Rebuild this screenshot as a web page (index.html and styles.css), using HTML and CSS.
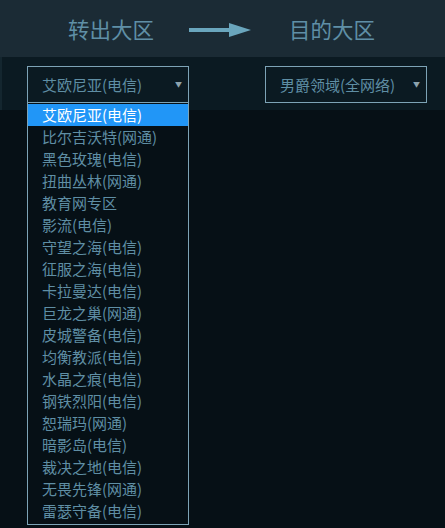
FILE: index.html
```html
<!DOCTYPE html>
<html lang="zh-CN">
<head>
    <meta charset="UTF-8" />
    <title>大区转移</title>
    <meta name="viewport" content="width=device-width, initial-scale=1.0" />
    <link rel="stylesheet" href="styles.css">
</head>
<body>
    <div class="header">
        <span class="title">转出大区</span>
        <svg class="arrow" width="62" height="16" viewBox="0 0 62 16">
            <rect x="0" y="6" width="42" height="4" fill="#6aa6bd" />
            <polygon points="40,1 62,8 40,15" fill="#6aa6bd" />
        </svg>
        <span class="title">目的大区</span>
    </div>

    <div class="toolbar">
        <div class="select-wrap">
            <div class="select">
                <span>艾欧尼亚(电信)</span>
                <span class="caret">▼</span>
            </div>
            <ul class="options">
                <li class="active">艾欧尼亚(电信)</li>
                <li>比尔吉沃特(网通)</li>
                <li>黑色玫瑰(电信)</li>
                <li>扭曲丛林(网通)</li>
                <li>教育网专区</li>
                <li>影流(电信)</li>
                <li>守望之海(电信)</li>
                <li>征服之海(电信)</li>
                <li>卡拉曼达(电信)</li>
                <li>巨龙之巢(网通)</li>
                <li>皮城警备(电信)</li>
                <li>均衡教派(电信)</li>
                <li>水晶之痕(电信)</li>
                <li>钢铁烈阳(电信)</li>
                <li>恕瑞玛(网通)</li>
                <li>暗影岛(电信)</li>
                <li>裁决之地(电信)</li>
                <li>无畏先锋(网通)</li>
                <li>雷瑟守备(电信)</li>
            </ul>
        </div>
        <div class="select-wrap">
            <div class="select">
                <span>男爵领域(全网络)</span>
                <span class="caret">▼</span>
            </div>
        </div>
    </div>
</body>
</html>
```

FILE: styles.css
```css
:root {
    --text-color: #5f8ea4;
    --border-color: #7da3b6;
    --active-color: #2196f7;
}

body {
    margin: 0;
    background: #061016;
    font-family: "Microsoft YaHei", "Noto Sans CJK SC", sans-serif;
    color: var(--text-color);
    height: 528px;
    overflow: hidden;
}

.header {
    height: 57px;
    background: #1b2b35;
    display: flex;
    align-items: center;
    padding-left: 68px;
    box-sizing: border-box;
}

.title {
    font-size: 21.5px;
    color: #5f8fa6;
    line-height: 1;
}

.arrow {
    margin: 2px 38px 0 35px;
}

.toolbar {
    height: 53px;
    background: #0b1a22;
    border-left: 2px solid #14262f;
    display: flex;
    justify-content: space-between;
    padding: 9px 18px 0 25px;
    box-sizing: border-box;
}

.select-wrap {
    position: relative;
    width: 162px;
}

.select {
    height: 37px;
    border: 1px solid var(--border-color);
    box-sizing: border-box;
    display: flex;
    align-items: center;
    justify-content: space-between;
    padding: 0 6px 0 14px;
    font-size: 15px;
}

.caret {
    font-size: 7px;
    color: #8da3ae;
    margin-top: -2px;
}

.options {
    position: absolute;
    top: 36px;
    left: 0;
    width: 162px;
    margin: 0;
    padding: 1px 0 2px;
    list-style: none;
    border: 1px solid var(--border-color);
    box-sizing: border-box;
    background: #061016;
}

.options li {
    height: 22px;
    line-height: 22px;
    padding-left: 14px;
    font-size: 15px;
    white-space: nowrap;
}

.options li.active {
    background: var(--active-color);
    color: #ffffff;
}
```
